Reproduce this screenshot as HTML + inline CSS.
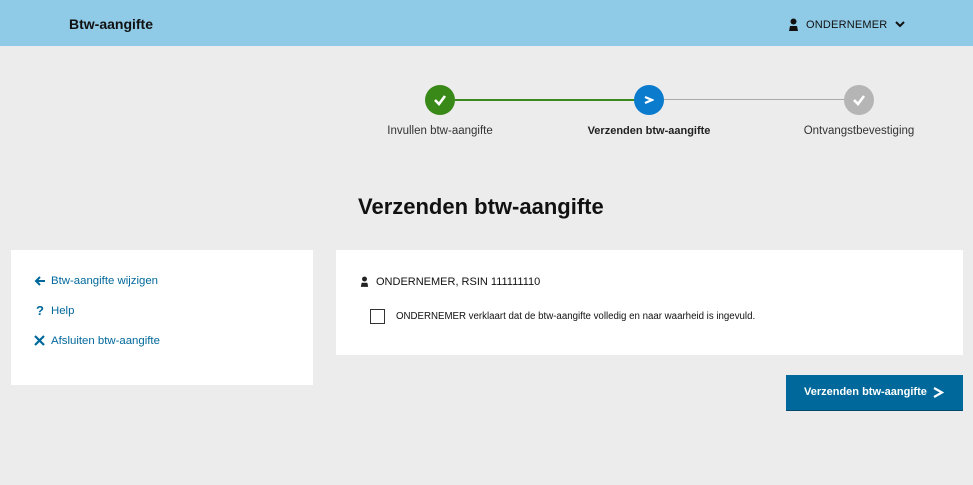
<!DOCTYPE html>
<html><head><style>
body{margin:0;width:973px;height:485px;background:#ececec;font-family:"Liberation Sans",sans-serif;position:relative;overflow:hidden}
.hdr{position:absolute;left:0;top:0;width:973px;height:46px;background:#8fcae7}
.abs{position:absolute}
.c{position:absolute;width:30px;height:30px;border-radius:50%;top:85px}
.lbl{position:absolute;top:125px;font-size:11.5px;color:#333;transform:translateX(-50%);white-space:nowrap}
.panel{position:absolute;background:#fff}
.lnk{position:absolute;left:51px;font-size:11.4px;color:#01689b}
</style></head><body>
<div class="hdr"></div>
<div class="abs" style="left:69px;top:16px;font-size:14px;font-weight:bold;color:#111">Btw-aangifte</div>
<svg class="abs" style="left:788px;top:18px" width="11" height="13" viewBox="0 0 11 13"><circle cx="5.5" cy="3.5" r="3" fill="#111"/><path d="M1 13 L2 8 L9 8 L10 13Z" fill="#111"/></svg>
<div class="abs" style="left:806px;top:19px;font-size:11px;color:#111;letter-spacing:.2px">ONDERNEMER</div>
<svg class="abs" style="left:895px;top:21px" width="10" height="7"><path d="M1 1 L5 5 L9 1" stroke="#111" stroke-width="2" fill="none"/></svg>

<div class="abs" style="left:455px;top:99px;width:180px;height:1.5px;background:#3b8a1d"></div>
<div class="abs" style="left:664px;top:99px;width:180px;height:1px;background:#aaa"></div>
<div class="c" style="left:425px;background:#398918"></div>
<div class="c" style="left:634px;background:#0a7bcd"></div>
<div class="c" style="left:844px;background:#b5b5b5"></div>
<svg class="abs" style="left:433px;top:93px" width="14" height="14"><path d="M2 7 L6 11 L12 3" stroke="#fff" stroke-width="2.6" fill="none"/></svg>
<svg class="abs" style="left:852px;top:93px" width="14" height="14"><path d="M2 7 L6 11 L12 3" stroke="#fff" stroke-width="2.6" fill="none"/></svg>
<svg class="abs" style="left:644px;top:95px" width="10" height="10"><path d="M1 2 L8 5 L1 8" stroke="#fff" stroke-width="2.2" fill="none"/></svg>
<div class="lbl" style="left:440px">Invullen btw-aangifte</div>
<div class="lbl" style="left:649px;font-weight:bold;color:#222;font-size:11px">Verzenden btw-aangifte</div>
<div class="lbl" style="left:859px">Ontvangstbevestiging</div>

<div class="abs" style="left:358px;top:194px;font-size:22px;font-weight:bold;color:#111">Verzenden btw-aangifte</div>

<div class="panel" style="left:11px;top:250px;width:302px;height:135px"></div>
<svg class="abs" style="left:34px;top:276px" width="12" height="10"><path d="M11 5 H2 M6 1 L2 5 L6 9" stroke="#01689b" stroke-width="2" fill="none"/></svg>
<div class="lnk" style="top:275px">Btw-aangifte wijzigen</div>
<div class="abs" style="left:36px;top:303px;font-size:13px;font-weight:bold;color:#01689b">?</div>
<div class="lnk" style="top:305px">Help</div>
<svg class="abs" style="left:34px;top:335px" width="11" height="11"><path d="M1 1 L10 10 M10 1 L1 10" stroke="#01689b" stroke-width="2.2"/></svg>
<div class="lnk" style="top:335px">Afsluiten btw-aangifte</div>

<div class="panel" style="left:336px;top:250px;width:627px;height:105px"></div>
<svg class="abs" style="left:360px;top:276px" width="9" height="11" viewBox="0 0 11 13"><circle cx="5.5" cy="3.5" r="3" fill="#222"/><path d="M1 13 L2 8 L9 8 L10 13Z" fill="#222"/></svg>
<div class="abs" style="left:376px;top:276px;font-size:11px;color:#111">ONDERNEMER, RSIN 111111110</div>
<div class="abs" style="left:370px;top:309px;width:13px;height:13px;border:1px solid #333;background:#fff"></div>
<div class="abs" style="left:396px;top:311px;font-size:9.7px;color:#111">ONDERNEMER verklaart dat de btw-aangifte volledig en naar waarheid is ingevuld.</div>

<div class="abs" style="left:786px;top:375px;width:177px;height:35px;background:#01689b;border-bottom:1px solid #014a70"></div>
<div class="abs" style="left:804px;top:386px;font-size:11px;font-weight:bold;color:#fff">Verzenden btw-aangifte</div>
<svg class="abs" style="left:933px;top:387px" width="11" height="11"><path d="M1 1 L9 5.5 L1 10" stroke="#fff" stroke-width="2.2" fill="none"/></svg>
</body></html>
